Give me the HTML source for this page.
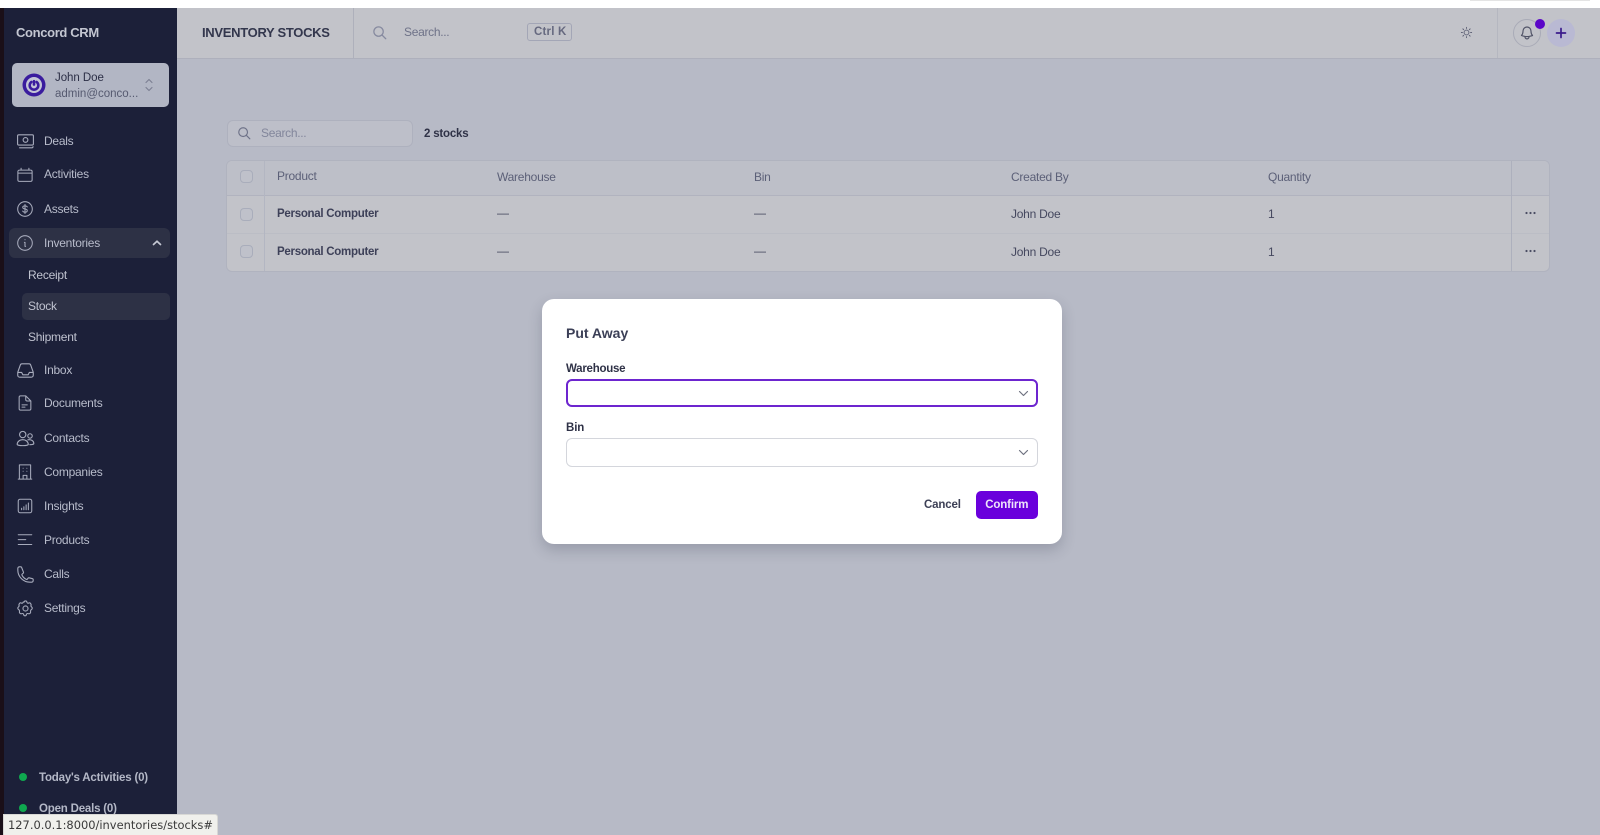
<!DOCTYPE html>
<html lang="en"><head><meta charset="utf-8"><title>Inventory Stocks</title>
<style>
*{box-sizing:border-box;margin:0;padding:0}
html,body{width:1600px;height:835px;overflow:hidden;background:#b7bac6;font-family:"Liberation Sans",sans-serif}
#w{position:absolute;left:0;top:0;width:1600px;height:835px;filter:blur(.3px)}
.a{position:absolute}
.t{position:absolute;line-height:16px;height:16px;white-space:nowrap;font-size:12px;letter-spacing:-.25px}
.n{color:#b8bccb;left:44px}
.s{color:#c0c3d0;left:28px}
svg.i{position:absolute;left:16px;width:18px;height:18px;fill:none;stroke:#a7abbc;stroke-width:1.4;stroke-linecap:round;stroke-linejoin:round}
.h{color:#5c6078;top:0}
.c{color:#45485f}
.cb{position:absolute;left:239.500px;width:13px;height:13px;border:1px solid #a9adbb;border-radius:4px;background:#bfc1ca}
</style></head><body><div id="w">
<div class="a" style="left:0;top:0;width:1600px;height:8px;background:#fff"></div>
<div class="a" style="left:1470px;top:0;width:120px;height:1px;background:#e4e4e4"></div>
<div class="a" style="left:0;top:8px;width:4px;height:827px;background:#1a0f18"></div>

<!-- sidebar -->
<div class="a" style="left:4px;top:8px;width:173px;height:827px;background:#1c2039"></div>
<div class="t" style="left:16px;top:25px;font-size:13px;font-weight:700;color:#c3c6d1;letter-spacing:-.35px">Concord CRM</div>
<div class="a" style="left:12px;top:63px;width:157px;height:44px;background:#b2b6c4;border-radius:5px"></div>
<svg class="a" style="left:22px;top:73px" width="24" height="24" viewBox="0 0 24 24" fill="none"><circle cx="12" cy="12" r="11.500" fill="#3a1c9e"/><circle cx="12" cy="12" r="8" fill="#c4c6d6"/><path d="M12 8.200v3.300M9.300 9a4.300 4.300 0 1 0 5.400 0" stroke="#3a1c9e" stroke-width="2.600" stroke-linecap="round"/></svg>
<div class="t" style="left:55px;top:70px;font-size:11.500px;color:#2c2f46;letter-spacing:-.05px">John Doe</div>
<div class="t" style="left:55px;top:85.500px;font-size:11.500px;color:#565a70;letter-spacing:0">admin@conco...</div>
<svg class="a" style="left:142px;top:77px" width="14" height="16" viewBox="0 0 14 16" fill="none" stroke="#7b7f92" stroke-width="1.100" stroke-linecap="round" stroke-linejoin="round"><path d="M4 5.500 7 2.500l3 3M4 10.500l3 3 3-3"/></svg>

<div class="a" style="left:9px;top:228px;width:161px;height:30px;background:#2d3145;border-radius:6px"></div>
<div class="a" style="left:22px;top:293px;width:148px;height:27px;background:#2d3145;border-radius:5px"></div>

<svg class="i" style="top:132px;width:19px;height:19px" viewBox="0 0 24 24"><rect x="2" y="3.500" width="20" height="13" rx="1.500"/><circle cx="12" cy="10" r="3"/><path d="M4.500 20h15.500a1.500 1.500 0 0 0 1.500-1.500"/></svg>
<div class="t n" style="top:133px">Deals</div>
<svg class="i" style="top:166px" viewBox="0 0 24 24"><path d="M6.800 3v2.500M17.200 3v2.500M2.500 18.500v-11a2 2 0 0 1 2-2h15a2 2 0 0 1 2 2v11a2 2 0 0 1-2 2h-15a2 2 0 0 1-2-2ZM2.500 9.500h19"/></svg>
<div class="t n" style="top:166px">Activities</div>
<svg class="i" style="top:200px" viewBox="0 0 24 24"><circle cx="12" cy="12" r="9.750"/><path d="M12 6v12M15 9.200c-.5-.9-1.600-1.400-3-1.400-1.800 0-3 .9-3 2.100s1.200 1.900 3 2.100 3 .9 3 2.100-1.200 2.100-3 2.100c-1.400 0-2.500-.5-3-1.400"/></svg>
<div class="t n" style="top:201px">Assets</div>
<svg class="i" style="top:234px" viewBox="0 0 24 24"><circle cx="12" cy="12" r="9.750"/><path d="M11.200 11.200H12v5.300h.8M12 7.600h.01"/></svg>
<div class="t n" style="top:235px">Inventories</div>
<svg class="a" style="left:151px;top:238px" width="12" height="10" viewBox="0 0 12 10" fill="none" stroke="#c5c8d3" stroke-width="1.700" stroke-linecap="round" stroke-linejoin="round"><path d="M2.500 6.500 6 3.200l3.500 3.300"/></svg>
<div class="t s" style="top:267px">Receipt</div>
<div class="t s" style="top:298px">Stock</div>
<div class="t s" style="top:329px">Shipment</div>
<svg class="i" style="top:361px;width:19px;height:19px" viewBox="0 0 24 24"><path d="M2.200 14.500h5l1.500 3h6.600l1.500-3h5M2.200 14.800V18a2.500 2.500 0 0 0 2.500 2.500h14.600a2.500 2.500 0 0 0 2.500-2.500v-3.200c0-.4-.1-.8-.2-1.100L18.500 5a2.200 2.200 0 0 0-2-1.500h-9a2.200 2.200 0 0 0-2 1.500L2.400 13.700c-.1.300-.2.700-.2 1.100Z"/></svg>
<div class="t n" style="top:362px">Inbox</div>
<svg class="i" style="top:394px" viewBox="0 0 24 24"><path d="M13 2.500H6a1.800 1.800 0 0 0-1.800 1.800v15.400A1.800 1.800 0 0 0 6 21.500h12a1.800 1.800 0 0 0 1.800-1.800V9.300ZM13 2.500v5a1.800 1.800 0 0 0 1.800 1.800h5M8 14.500h7M8 17.500h4"/></svg>
<div class="t n" style="top:395px">Documents</div>
<svg class="i" style="top:429px;width:19px;height:19px" viewBox="0 0 24 24"><circle cx="8.500" cy="7" r="4"/><circle cx="17.700" cy="8.800" r="2.800"/><path d="M1.500 19.500c0-3.500 3-6 7-6s7 2.500 7 6c0 .8-3 1.500-7 1.500s-7-.7-7-1.500ZM15 13.700c3.800-.8 7.500 1 7.500 4.800 0 .7-2.500 1.300-5 1.300"/></svg>
<div class="t n" style="top:430px">Contacts</div>
<svg class="i" style="top:463px" viewBox="0 0 24 24"><path d="M3 21.500h18M4.500 21.500v-19h15v19M9.500 21.500v-5h5v5M9.500 7h.01M14.500 7h.01M9.500 11h.01M14.500 11h.01"/></svg>
<div class="t n" style="top:464px">Companies</div>
<svg class="i" style="top:497px" viewBox="0 0 24 24"><rect x="3" y="3" width="18" height="18" rx="2.500"/><path d="M7.500 17v-2M10.500 17v-4M13.500 17V10.500M16.500 17V8"/></svg>
<div class="t n" style="top:498px">Insights</div>
<svg class="i" style="top:531px" viewBox="0 0 24 24"><path d="M3 5h18M3 11.500h10M3 18h18"/></svg>
<div class="t n" style="top:532px">Products</div>
<svg class="i" style="top:565px;width:19px;height:19px" viewBox="0 0 24 24"><path d="M2.300 6.500c0 8.300 6.900 15.200 15.200 15.200h2.200a2 2 0 0 0 2-2v-1.400c0-.5-.3-.9-.8-1l-4.400-1.100c-.4-.1-.9 0-1.200.4l-1 1.300c-.3.400-.8.500-1.200.3a11.400 11.400 0 0 1-5.600-5.600c-.2-.4-.1-.9.300-1.200l1.300-1c.4-.3.500-.8.400-1.200L7.100 3.100c-.1-.5-.5-.8-1-.8H4.300a2 2 0 0 0-2 2Z"/></svg>
<div class="t n" style="top:566px">Calls</div>
<svg class="i" style="top:599px;width:19px;height:19px" viewBox="0 0 24 24"><path d="M10.300 3.900c.1-.9.900-1.400 1.700-1.400s1.600.5 1.700 1.400c.2 1.200 1.500 1.800 2.500 1.200.8-.4 1.700-.2 2.200.5s.9 1.400.6 2.200c-.4 1-.1 1.600.7 2.200.7.500 1 1.300.8 2-.2.800-.8 1.400-1.500 1.700-.6.700-.9 1.400-.6 2.200.3.800 0 1.600-.6 2.200-.6.500-1.400.7-2.200.4-1-.5-2.300.1-2.500 1.200-.1.900-.9 1.600-1.700 1.600s-1.600-.7-1.700-1.600c-.2-1.100-1.500-1.700-2.500-1.200-.8.300-1.600.1-2.200-.4-.6-.6-.9-1.400-.6-2.200.3-.8 0-1.500-.6-2.200-.7-.3-1.300-.9-1.500-1.700-.2-.7.100-1.500.8-2 .8-.6 1.100-1.200.7-2.200-.3-.8.100-1.500.6-2.200s1.400-.9 2.200-.5c1 .6 2.300 0 2.500-1.200Z"/><circle cx="12" cy="12" r="3.200"/></svg>
<div class="t n" style="top:600px">Settings</div>

<div class="a" style="left:19px;top:773px;width:8px;height:8px;border-radius:50%;background:#0fa84f"></div>
<div class="t" style="left:39px;top:770px;font-size:11.500px;font-weight:700;color:#b4b8c7;letter-spacing:-.2px">Today's Activities (0)</div>
<div class="a" style="left:19px;top:804px;width:8px;height:8px;border-radius:50%;background:#0fa84f"></div>
<div class="t" style="left:39px;top:801px;font-size:11.500px;font-weight:700;color:#b4b8c7;letter-spacing:-.2px">Open Deals (0)</div>

<!-- header -->
<div class="a" style="left:177px;top:8px;width:1423px;height:51px;background:#c2c3c9;border-bottom:1px solid #aeb0bc"></div>
<div class="a" style="left:353px;top:8px;width:1px;height:50px;background:#aeb0bb"></div>
<div class="a" style="left:1497px;top:8px;width:1px;height:50px;background:#b5b7c0"></div>
<div class="t" style="left:202px;top:24.500px;font-size:13px;font-weight:700;color:#33374d;letter-spacing:-.3px">INVENTORY STOCKS</div>
<svg class="a" style="left:372px;top:25px" width="15" height="15" viewBox="0 0 24 24" fill="none" stroke="#868a9f" stroke-width="2" stroke-linecap="round"><circle cx="10.500" cy="10.500" r="7.500"/><path d="m16 16 6 6"/></svg>
<div class="t" style="left:404px;top:24px;color:#6e7288;letter-spacing:-.3px">Search...</div>
<div class="a" style="left:527px;top:23px;width:45px;height:18px;border:1px solid #a3a6b6;border-radius:3px;background:#c2c3c9"></div>
<div class="t" style="left:534px;top:24px;font-size:11.500px;font-weight:700;color:#66697f;letter-spacing:.2px">Ctrl K</div>
<svg class="a" style="left:1460px;top:26px" width="13" height="13" viewBox="0 0 24 24" fill="none" stroke="#5d6075" stroke-width="1.700" stroke-linecap="round"><circle cx="12" cy="12" r="4.500"/><path d="M12 2.500v2M12 19.500v2M2.500 12h2M19.500 12h2M5.300 5.300l1.400 1.400M17.300 17.300l1.400 1.400M5.300 18.700l1.400-1.400M17.300 6.700l1.400-1.400"/></svg>
<div class="a" style="left:1513px;top:19px;width:28px;height:28px;border-radius:50%;border:1px solid #a9abb7"></div>
<svg class="a" style="left:1519px;top:25px" width="16" height="16" viewBox="0 0 24 24" fill="none" stroke="#4f5266" stroke-width="1.700" stroke-linecap="round" stroke-linejoin="round"><path d="M14.900 17.100a24 24 0 0 0 5.400-1.300A9 9 0 0 1 18 9.750V9A6 6 0 0 0 6 9v.75a9 9 0 0 1-2.300 6 24 24 0 0 0 5.400 1.350m5.800 0a24 24 0 0 1-5.800 0m5.800 0a3 3 0 1 1-5.800 0"/></svg>
<div class="a" style="left:1534.500px;top:18.500px;width:10px;height:10px;border-radius:50%;background:#5b06c8"></div>
<div class="a" style="left:1547px;top:19px;width:28px;height:28px;border-radius:50%;background:#b9b9d3"></div>
<svg class="a" style="left:1555px;top:27px" width="12" height="12" viewBox="0 0 12 12" fill="none" stroke="#3a1a8c" stroke-width="1.700" stroke-linecap="round"><path d="M6 1.500v9M1.500 6h9"/></svg>

<!-- toolbar -->
<div class="a" style="left:226.500px;top:120px;width:186.500px;height:27px;border-radius:6px;background:#bdbfc9;border:1px solid #aeb1be"></div>
<svg class="a" style="left:237px;top:126px" width="14" height="14" viewBox="0 0 24 24" fill="none" stroke="#6f7389" stroke-width="2" stroke-linecap="round"><circle cx="10.500" cy="10.500" r="7.500"/><path d="m16 16 6 6"/></svg>
<div class="t" style="left:261px;top:125px;color:#82869b;letter-spacing:-.3px">Search...</div>
<div class="t" style="left:424px;top:125.500px;font-weight:700;color:#2f3247;font-size:11.500px;letter-spacing:-.2px">2 stocks</div>

<!-- table -->
<div class="a" style="left:226px;top:160px;width:1324px;height:112px;border:1px solid #b0b3bf;border-radius:6px;background:#c2c3c9;overflow:hidden">
<div class="a" style="left:0;top:0;width:100%;height:35px;background:#bdbfc8;border-bottom:1px solid #b1b3bf"></div>
<div class="a" style="left:0;top:72px;width:100%;height:1px;background:#bbbdc5"></div>
<div class="a" style="left:37px;top:0;width:1px;height:110px;background:#b3b6c2"></div>
<div class="a" style="left:1284px;top:0;width:1px;height:110px;background:#adb0bd"></div>
</div>
<div class="cb" style="top:170px"></div><div class="cb" style="top:207.500px"></div><div class="cb" style="top:245px"></div>
<div class="t h" style="left:277px;top:168px">Product</div>
<div class="t h" style="left:497px;top:169px">Warehouse</div>
<div class="t h" style="left:754px;top:169px">Bin</div>
<div class="t h" style="left:1011px;top:169px">Created By</div>
<div class="t h" style="left:1268px;top:169px">Quantity</div>

<div class="t" style="left:277px;top:206px;font-size:11.500px;font-weight:700;color:#3d4058;letter-spacing:-.28px">Personal Computer</div>
<div class="t" style="left:277px;top:244px;font-size:11.500px;font-weight:700;color:#3d4058;letter-spacing:-.28px">Personal Computer</div>
<div class="t c" style="left:497px;top:205px">—</div><div class="t c" style="left:497px;top:243px">—</div>
<div class="t c" style="left:754px;top:205px">—</div><div class="t c" style="left:754px;top:243px">—</div>
<div class="t c" style="left:1011px;top:206px">John Doe</div><div class="t c" style="left:1011px;top:244px">John Doe</div>
<div class="t c" style="left:1268px;top:206px">1</div><div class="t c" style="left:1268px;top:244px">1</div>
<svg class="a" style="left:1525px;top:211px" width="11" height="4" viewBox="0 0 11 4" fill="#4a4d63"><circle cx="1.500" cy="2" r="1.100"/><circle cx="5.500" cy="2" r="1.100"/><circle cx="9.500" cy="2" r="1.100"/></svg>
<svg class="a" style="left:1525px;top:249px" width="11" height="4" viewBox="0 0 11 4" fill="#4a4d63"><circle cx="1.500" cy="2" r="1.100"/><circle cx="5.500" cy="2" r="1.100"/><circle cx="9.500" cy="2" r="1.100"/></svg>

<!-- modal -->
<div class="a" style="left:542px;top:299px;width:520px;height:245px;background:#fff;border-radius:12px;box-shadow:0 6px 14px rgba(40,44,70,.22)"></div>
<div class="t" style="left:566px;top:324.500px;font-size:14px;font-weight:700;color:#3b3f56;letter-spacing:0">Put Away</div>
<div class="t" style="left:566px;top:361px;font-size:11.500px;font-weight:700;color:#2f3247;letter-spacing:-.25px">Warehouse</div>
<div class="a" style="left:566px;top:379px;width:472px;height:28px;border:2px solid #6d25cf;border-radius:6px;background:#fff"></div>
<svg class="a" style="left:1017px;top:387px" width="13" height="13" viewBox="0 0 13 13" fill="none" stroke="#6f7280" stroke-width="1.200" stroke-linecap="round" stroke-linejoin="round"><path d="M2.500 4.500 6.500 8.500l4-4"/></svg>
<div class="t" style="left:566px;top:420px;font-size:11.500px;font-weight:700;color:#2f3247;letter-spacing:-.1px">Bin</div>
<div class="a" style="left:566px;top:438px;width:472px;height:29px;border:1px solid #d4d6dc;border-radius:6px;background:#fff"></div>
<svg class="a" style="left:1017px;top:446px" width="13" height="13" viewBox="0 0 13 13" fill="none" stroke="#6f7280" stroke-width="1.200" stroke-linecap="round" stroke-linejoin="round"><path d="M2.500 4.500 6.500 8.500l4-4"/></svg>
<div class="t" style="left:924px;top:497px;font-size:11.500px;font-weight:700;color:#3d4056;letter-spacing:-.15px">Cancel</div>
<div class="a" style="left:975.500px;top:491px;width:62.500px;height:28px;border-radius:5px;background:#6a00dc"></div>
<div class="t" style="left:975.500px;top:497px;width:62.500px;text-align:center;font-size:11.500px;font-weight:700;color:#eee4fb;letter-spacing:-.15px">Confirm</div>

<!-- status bubble -->
<div class="a" style="left:3px;top:814px;width:215px;height:21px;background:#f0f0ec;border-top-right-radius:3px;border:1px solid #d8d8d5;border-bottom:none"></div>
<div class="t" style="left:8px;top:817px;font-family:'DejaVu Sans',sans-serif;font-size:11.450px;letter-spacing:0;color:#3a3a3a">127.0.0.1:8000/inventories/stocks#</div>
</div></body></html>
